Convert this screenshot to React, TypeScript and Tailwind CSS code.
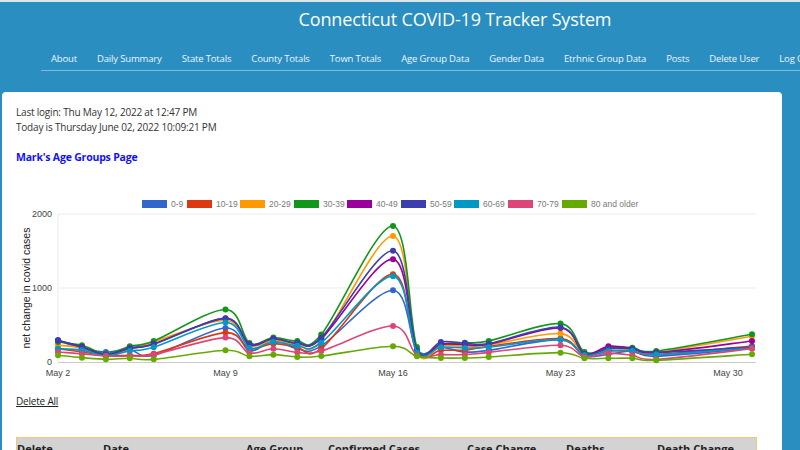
import React from "react";

const NAV = [
  "About",
  "Daily Summary",
  "State Totals",
  "County Totals",
  "Town Totals",
  "Age Group Data",
  "Gender Data",
  "Etrhnic Group Data",
  "Posts",
  "Delete User",
  "Log Out",
];

// weekdays in May 2022 that have data (day of month)
const DAYS = [2, 3, 4, 5, 6, 9, 10, 11, 12, 13, 16, 17, 18, 19, 20, 23, 24, 25, 26, 27, 31];

const SERIES: { label: string; color: string; data: number[] }[] = [
  { label: "0-9", color: "#3366cc", data: [293, 180, 135, 167, 90, 460, 149, 293, 180, 217, 970, 158, 200, 135, 158, 302, 81, 104, 149, 77, 190] },
  { label: "10-19", color: "#dc3912", data: [180, 135, 90, 90, 113, 397, 180, 248, 200, 180, 1187, 120, 158, 160, 212, 316, 90, 149, 140, 100, 217] },
  { label: "20-29", color: "#ff9900", data: [226, 190, 90, 170, 271, 564, 220, 290, 240, 290, 1702, 140, 220, 212, 230, 384, 100, 180, 170, 131, 348] },
  { label: "30-39", color: "#109618", data: [271, 226, 113, 212, 284, 709, 257, 330, 284, 370, 1837, 203, 239, 260, 284, 519, 135, 194, 194, 149, 375] },
  { label: "40-49", color: "#990099", data: [290, 205, 95, 185, 245, 587, 235, 315, 255, 316, 1390, 150, 240, 235, 240, 460, 105, 212, 180, 125, 284] },
  { label: "50-59", color: "#3b3eac", data: [293, 200, 100, 190, 239, 590, 240, 310, 260, 330, 1503, 158, 271, 257, 250, 470, 110, 180, 180, 130, 200] },
  { label: "60-69", color: "#0099c6", data: [180, 160, 85, 150, 200, 533, 190, 270, 220, 260, 1160, 130, 200, 190, 200, 300, 90, 150, 150, 100, 190] },
  { label: "70-79", color: "#dd4477", data: [135, 110, 80, 81, 100, 330, 122, 180, 130, 149, 487, 90, 99, 99, 130, 226, 70, 120, 90, 36, 180] },
  { label: "80 and older", color: "#66aa00", data: [90, 59, 36, 50, 36, 158, 77, 99, 68, 81, 212, 77, 54, 54, 68, 126, 50, 50, 50, 23, 104] },
];

// legend swatch x positions (svg coords)
const LEGEND_X = [140, 185, 238, 292, 345, 399, 452, 506, 560];

const X0 = 56;
const DAY_W = 23.93;
const Y0 = 170;
const Y_PER = 148 / 2000;

const px = (day: number) => X0 + (day - 2) * DAY_W;
const py = (v: number) => Y0 - v * Y_PER;

function smoothPath(pts: [number, number][]) {
  let d = `M${pts[0][0]},${pts[0][1]}`;
  for (let i = 0; i < pts.length - 1; i++) {
    const p0 = pts[i - 1] ?? pts[i];
    const p1 = pts[i];
    const p2 = pts[i + 1];
    const p3 = pts[i + 2] ?? p2;
    const c1x = p1[0] + (p2[0] - p0[0]) / 6;
    const c1y = p1[1] + (p2[1] - p0[1]) / 6;
    const c2x = p2[0] - (p3[0] - p1[0]) / 6;
    const c2y = p2[1] - (p3[1] - p1[1]) / 6;
    d += ` C${c1x},${c1y} ${c2x},${c2y} ${p2[0]},${p2[1]}`;
  }
  return d;
}

function AgeChart() {
  return (
    <svg width={780} height={190} className="block" style={{ fontFamily: '"Liberation Sans", Arial, sans-serif' }}>
      {SERIES.map((s, i) => (
        <g key={s.label} transform={`translate(${LEGEND_X[i]},0)`}>
          <rect x={0} y={8} width={25} height={8} fill={s.color} />
          <text x={29} y={15} fontSize={8.5} fill="#7a7a7a">
            {s.label}
          </text>
        </g>
      ))}

      <line x1={X0} x2={754} y1={22} y2={22} stroke="#ebebeb" />
      <line x1={X0} x2={754} y1={96} y2={96} stroke="#ebebeb" />
      <line x1={X0} x2={X0} y1={22} y2={170} stroke="#ebebeb" />
      <line x1={X0} x2={754} y1={170.5} y2={170.5} stroke="#cccccc" />

      <text x={50} y={25} fontSize={9} fill="#444" textAnchor="end">2000</text>
      <text x={50} y={99} fontSize={9} fill="#444" textAnchor="end">1000</text>
      <text x={50} y={173} fontSize={9} fill="#444" textAnchor="end">0</text>

      {[2, 9, 16, 23, 30].map((d) => (
        <text key={d} x={px(d)} y={184} fontSize={9} fill="#444" textAnchor="middle">
          May {d}
        </text>
      ))}

      <text transform="translate(28,96) rotate(-90)" fontSize={10.5} fill="#222" textAnchor="middle">
        net change in covid cases
      </text>

      {SERIES.map((s) => {
        const pts = s.data.map((v, i) => [px(DAYS[i]), py(v)] as [number, number]);
        return (
          <g key={s.label}>
            <path d={smoothPath(pts)} fill="none" stroke={s.color} strokeWidth={1.6} />
            {pts.map(([x, y], i) => (
              <circle key={i} cx={x} cy={y} r={3} fill={s.color} />
            ))}
          </g>
        );
      })}
    </svg>
  );
}

const COLS = [
  { label: "Delete", w: "w-[86px]" },
  { label: "Date", w: "w-[143px]" },
  { label: "Age Group", w: "w-[82px]" },
  { label: "Confirmed Cases", w: "w-[139px]" },
  { label: "Case Change", w: "w-[99px]" },
  { label: "Deaths", w: "w-[91px]" },
  { label: "Death Change", w: "flex-1" },
];

export default function App() {
  return (
    <div
      className="h-[450px] w-[800px] overflow-hidden border-t-2 border-[#dde6ec] bg-[#2a8ec1]"
      style={{ fontFamily: '"Open Sans", "Noto Sans", sans-serif' }}
    >
      <header className="text-white">
        <h1 className="flex h-[34px] items-center justify-center pl-[110px] text-[18px] leading-none tracking-[-0.15px]">
          Connecticut COVID-19 Tracker System
        </h1>
        <nav className="ml-[41px] mt-[8px] flex h-[27px] w-[900px] items-center border-b border-[#7fbcdb] pt-[4px] text-[9.5px] tracking-[-0.16px] whitespace-nowrap text-[#eef6fb]">
          {NAV.map((n) => (
            <a key={n} className="px-[10px]">
              {n}
            </a>
          ))}
        </nav>
      </header>

      <main className="ml-[2px] mt-[21px] h-[400px] w-[780px] rounded-[4px] bg-white pt-[13px]">
        <div className="px-[14px] text-[10px] leading-[15px] tracking-[-0.2px] text-[#333]">
          <p>Last login: Thu May 12, 2022 at 12:47 PM</p>
          <p>Today is Thursday June 02, 2022 10:09:21 PM</p>
          <p className="mt-[15px] text-[10.5px] font-bold text-[#1010ff]">Mark's Age Groups Page</p>
        </div>

        <div className="mt-[27px]">
          <AgeChart />
        </div>

        <div className="px-[14px] pt-[12px] text-[10px] leading-[15px] tracking-[-0.2px] text-[#222]">
          <a className="underline">Delete All</a>
        </div>

        <div className="mx-[14px] mt-[28px] flex h-[24px] w-[741px] items-center border border-[#f5c674] bg-[#d3d3d3] text-[11px] font-bold text-[#222]">
          {COLS.map((c) => (
            <div key={c.label} className={c.w}>
              {c.label}
            </div>
          ))}
        </div>
      </main>
    </div>
  );
}
